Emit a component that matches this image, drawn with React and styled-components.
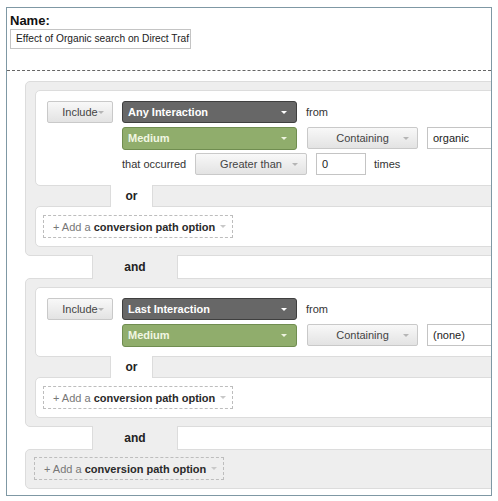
import styled, { createGlobalStyle } from "styled-components";

const GlobalStyle = createGlobalStyle`
  body {
    margin: 0;
    background: #ffffff;
    font-family: "Liberation Sans", Arial, sans-serif;
  }
`;

const Page = styled.div`
  width: 498px;
  height: 501px;
  padding: 7px 0 0 6px;
  box-sizing: border-box;
`;

const Frame = styled.div`
  width: 486px;
  height: 489px;
  border: 1px solid #7f98a4;
  box-sizing: border-box;
  overflow: hidden;
  background: #fff;
`;

const Header = styled.div`
  height: 63px;
  box-sizing: border-box;
  padding: 4px 3px 0;
  border-bottom: 1px dashed #666;
`;

const NameLabel = styled.div`
  font-size: 13px;
  font-weight: bold;
  color: #111;
  line-height: 17px;
`;

const NameInput = styled.div`
  width: 181px;
  height: 20px;
  box-sizing: border-box;
  border: 1px solid #c4c4c4;
  padding: 0 4px 0 5px;
  font-size: 10.2px;
  line-height: 18px;
  color: #222;
  white-space: nowrap;
  overflow: hidden;
`;

const Body = styled.div`
  padding: 10px 0 0 18px;
`;

const Block = styled.div`
  background: #eeeeee;
  border: 1px solid #dcdcdc;
  border-radius: 5px;
  margin-right: -20px;
  padding: ${(p) => (p.$tight ? "7px 0 8px 8px" : "8px 0 8px 9px")};
`;

const Card = styled.div`
  background: #fff;
  border: 1px solid #dcdcdc;
  border-radius: 5px;
  padding: ${(p) => (p.$add ? "8px 7px" : "10px 11px")};
  display: flex;
  gap: 9px;
`;

const Bridge = styled.div`
  position: relative;
  height: ${(p) => p.$h}px;
  margin: -1px 0 -1px ${(p) => p.$left}px;
  width: ${(p) => p.$w}px;
  background: ${(p) => p.$bg};
  border-left: 1px solid #dcdcdc;
  border-right: 1px solid #dcdcdc;
  box-sizing: border-box;
  display: flex;
  align-items: center;
  justify-content: center;
  font-size: 12px;
  font-weight: bold;
  color: #222;
`;

const Column = styled.div`
  display: flex;
  flex-direction: column;
  gap: 4px;
`;

const Row = styled.div`
  display: flex;
  align-items: center;
  height: 22px;
`;

const Arrow = styled.span`
  width: 0;
  height: 0;
  border-left: 3px solid transparent;
  border-right: 3px solid transparent;
  border-top: 3px solid ${(p) => p.$color || "#b5b5b5"};
  flex: none;
`;

const GrayButton = styled.div`
  width: ${(p) => p.$w}px;
  height: 22px;
  box-sizing: border-box;
  flex: none;
  display: flex;
  align-items: center;
  padding: 0 8px 0 14px;
  background: linear-gradient(#f8f8f8, #e3e3e3);
  border: 1px solid #c9c9c9;
  border-radius: 2px;
  font-size: 11px;
  color: #444;
  margin-left: ${(p) => p.$ml || 0}px;

  span.t {
    flex: 1;
    text-align: center;
  }
`;

const ColorSelect = styled.div`
  width: 175px;
  height: ${(p) => p.$h || 22}px;
  box-sizing: border-box;
  flex: none;
  display: flex;
  align-items: center;
  justify-content: space-between;
  padding: 0 9px 0 5px;
  border-radius: 3px;
  font-size: 11px;
  font-weight: bold;
  background: ${(p) => (p.$green ? "#90ad6c" : "#676767")};
  border: 1px solid ${(p) => (p.$green ? "#708d50" : "#3f3f3f")};
  color: ${(p) => (p.$green ? "#f0f6e2" : "#ffffff")};
`;

const TextInput = styled.div`
  width: ${(p) => p.$w}px;
  height: 22px;
  box-sizing: border-box;
  flex: none;
  margin-left: ${(p) => p.$ml || 0}px;
  border: 1px solid #c4c4c4;
  background: #fff;
  padding: 0 5px;
  font-size: 11px;
  line-height: 20px;
  color: #222;
`;

const Label = styled.span`
  font-size: 11px;
  color: #333;
  margin-left: ${(p) => p.$ml || 0}px;
  width: ${(p) => (p.$w ? `${p.$w}px` : "auto")};
  flex: none;
`;

const AddOption = styled.div`
  width: ${(p) => p.$w}px;
  height: 23px;
  box-sizing: border-box;
  border: 1px dashed #bdbdbd;
  display: flex;
  align-items: center;
  padding: 0 6px 0 9px;
  font-size: 11px;
  color: #777;
  gap: 4px;

  b {
    color: #2a2a2a;
  }
`;

const AddText = styled.span`
  flex: 1;
`;

const AddPath = ({ width }) => (
  <AddOption $w={width}>
    <AddText>
      + Add a <b>conversion path option</b>
    </AddText>
    <Arrow $color="#c8c8c8" />
  </AddOption>
);

const Select = ({ children, w, ml }) => (
  <GrayButton $w={w} $ml={ml}>
    <span className="t">{children}</span>
    <Arrow />
  </GrayButton>
);

export default function App() {
  return (
    <Page>
      <GlobalStyle />
      <Frame>
        <Header>
          <NameLabel>Name:</NameLabel>
          <NameInput>Effect of Organic search on Direct Traf</NameInput>
        </Header>
        <Body>
          <Block>
            <Card>
              <Select w={66}>Include</Select>
              <Column>
                <Row>
                  <ColorSelect>
                    Any Interaction <Arrow $color="#fff" />
                  </ColorSelect>
                  <Label $ml={9}>from</Label>
                </Row>
                <Row>
                  <ColorSelect $green $h={23}>
                    Medium <Arrow $color="#eef3e0" />
                  </ColorSelect>
                  <Select w={111} ml={10}>
                    Containing
                  </Select>
                  <TextInput $w={90} $ml={9}>
                    organic
                  </TextInput>
                </Row>
                <Row>
                  <Label $w={73}>that occurred</Label>
                  <Select w={112}>Greater than</Select>
                  <TextInput $w={50} $ml={9}>
                    0
                  </TextInput>
                  <Label $ml={8}>times</Label>
                </Row>
              </Column>
            </Card>
            <Bridge $h={22} $left={75} $w={43} $bg="#fff">
              or
            </Bridge>
            <Card $add>
              <AddPath width={190} />
            </Card>
          </Block>
          <Bridge $h={24} $left={67} $w={86} $bg="#eeeeee">
            and
          </Bridge>
          <Block>
            <Card>
              <Select w={66}>Include</Select>
              <Column>
                <Row>
                  <ColorSelect>
                    Last Interaction <Arrow $color="#fff" />
                  </ColorSelect>
                  <Label $ml={9}>from</Label>
                </Row>
                <Row>
                  <ColorSelect $green $h={23}>
                    Medium <Arrow $color="#eef3e0" />
                  </ColorSelect>
                  <Select w={111} ml={10}>
                    Containing
                  </Select>
                  <TextInput $w={90} $ml={9}>
                    (none)
                  </TextInput>
                </Row>
              </Column>
            </Card>
            <Bridge $h={22} $left={75} $w={43} $bg="#fff">
              or
            </Bridge>
            <Card $add>
              <AddPath width={190} />
            </Card>
          </Block>
          <Bridge $h={24} $left={67} $w={86} $bg="#eeeeee">
            and
          </Bridge>
          <Block $tight>
            <AddPath width={190} />
          </Block>
        </Body>
      </Frame>
    </Page>
  );
}
